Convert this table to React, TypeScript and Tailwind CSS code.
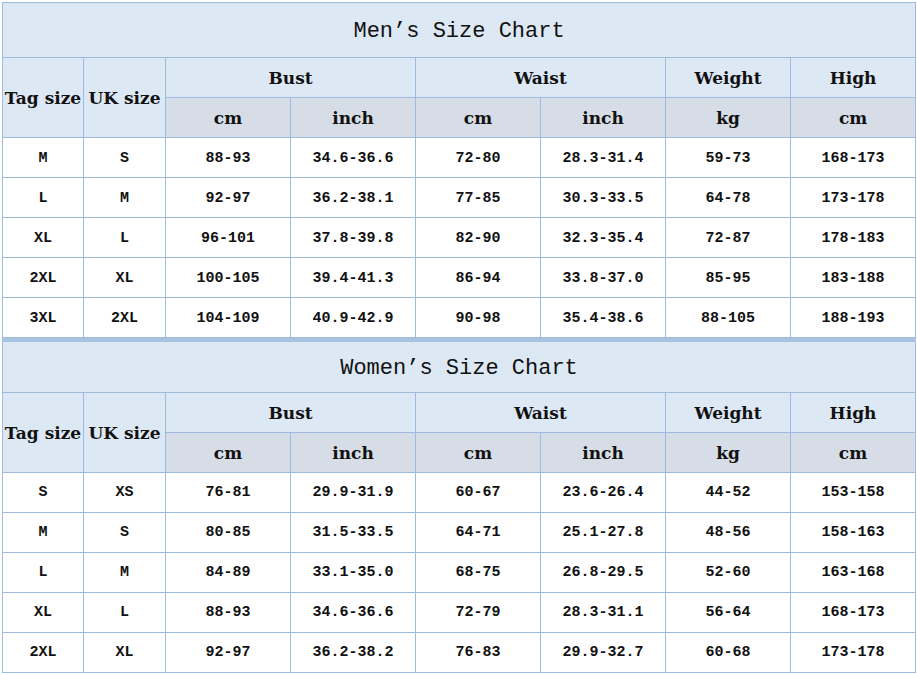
import React from 'react';

type Chart = {
  title: string;
  rows: string[][];
};

const charts: Chart[] = [
  {
    title: 'Men’s Size Chart',
    rows: [
      ['M', 'S', '88-93', '34.6-36.6', '72-80', '28.3-31.4', '59-73', '168-173'],
      ['L', 'M', '92-97', '36.2-38.1', '77-85', '30.3-33.5', '64-78', '173-178'],
      ['XL', 'L', '96-101', '37.8-39.8', '82-90', '32.3-35.4', '72-87', '178-183'],
      ['2XL', 'XL', '100-105', '39.4-41.3', '86-94', '33.8-37.0', '85-95', '183-188'],
      ['3XL', '2XL', '104-109', '40.9-42.9', '90-98', '35.4-38.6', '88-105', '188-193'],
    ],
  },
  {
    title: 'Women’s Size Chart',
    rows: [
      ['S', 'XS', '76-81', '29.9-31.9', '60-67', '23.6-26.4', '44-52', '153-158'],
      ['M', 'S', '80-85', '31.5-33.5', '64-71', '25.1-27.8', '48-56', '158-163'],
      ['L', 'M', '84-89', '33.1-35.0', '68-75', '26.8-29.5', '52-60', '163-168'],
      ['XL', 'L', '88-93', '34.6-36.6', '72-79', '28.3-31.1', '56-64', '168-173'],
      ['2XL', 'XL', '92-97', '36.2-38.2', '76-83', '29.9-32.7', '60-68', '173-178'],
    ],
  },
];

const serif = { fontFamily: '"DejaVu Serif", "Liberation Serif", serif' };
const mono = { fontFamily: '"Liberation Mono", "DejaVu Sans Mono", monospace' };

const cell = 'border border-[#9dbbdf] text-center align-middle px-0 pt-[3px] pb-0';

const SizeTable: React.FC<{ chart: Chart; first: boolean }> = ({ chart, first }) => (
  <table className={`w-full border-collapse table-fixed ${first ? '' : 'border-t-[4px] border-[#a9c3e2]'}`}>
    <colgroup>
      <col className="w-[81px]" />
      <col className="w-[82px]" />
      <col className="w-[125px]" />
      <col className="w-[125px]" />
      <col className="w-[125px]" />
      <col className="w-[125px]" />
      <col className="w-[125px]" />
      <col className="w-[125px]" />
    </colgroup>
    <tbody>
      <tr className={first ? 'h-[55px]' : 'h-[52px]'}>
        <td colSpan={8} className={`${cell} bg-[#dde8f5] text-[22px] text-[#111]`} style={mono}>
          {chart.title}
        </td>
      </tr>
      <tr className="h-[40px] bg-[#dde8f5]">
        <td rowSpan={2} className={`${cell} text-[17px] font-bold text-[#111] whitespace-nowrap`} style={serif}>
          Tag size
        </td>
        <td rowSpan={2} className={`${cell} text-[17px] font-bold text-[#111] whitespace-nowrap`} style={serif}>
          UK size
        </td>
        {['Bust', 'Waist'].map(h => (
          <td key={h} colSpan={2} className={`${cell} text-[17px] font-bold text-[#111]`} style={serif}>
            {h}
          </td>
        ))}
        {['Weight', 'High'].map(h => (
          <td key={h} className={`${cell} text-[17px] font-bold text-[#111]`} style={serif}>
            {h}
          </td>
        ))}
      </tr>
      <tr className="h-[40px] bg-[#d6dde6]">
        {['cm', 'inch', 'cm', 'inch', 'kg', 'cm'].map((u, i) => (
          <td key={i} className={`${cell} text-[17px] font-bold text-[#111]`} style={serif}>
            {u}
          </td>
        ))}
      </tr>
      {chart.rows.map((r, ri) => (
        <tr key={ri} className="h-[40px] bg-white">
          {r.map((v, ci) => (
            <td key={ci} className={`${cell} text-[15px] font-bold text-[#111]`} style={mono}>
              {v}
            </td>
          ))}
        </tr>
      ))}
    </tbody>
  </table>
);

export default function App() {
  return (
    <div className="w-[917px] h-[675px] bg-white pl-[2px] pt-[2px] overflow-hidden">
      <div className="w-[913px]">
        {charts.map((c, i) => (
          <SizeTable key={c.title} chart={c} first={i === 0} />
        ))}
      </div>
    </div>
  );
}
